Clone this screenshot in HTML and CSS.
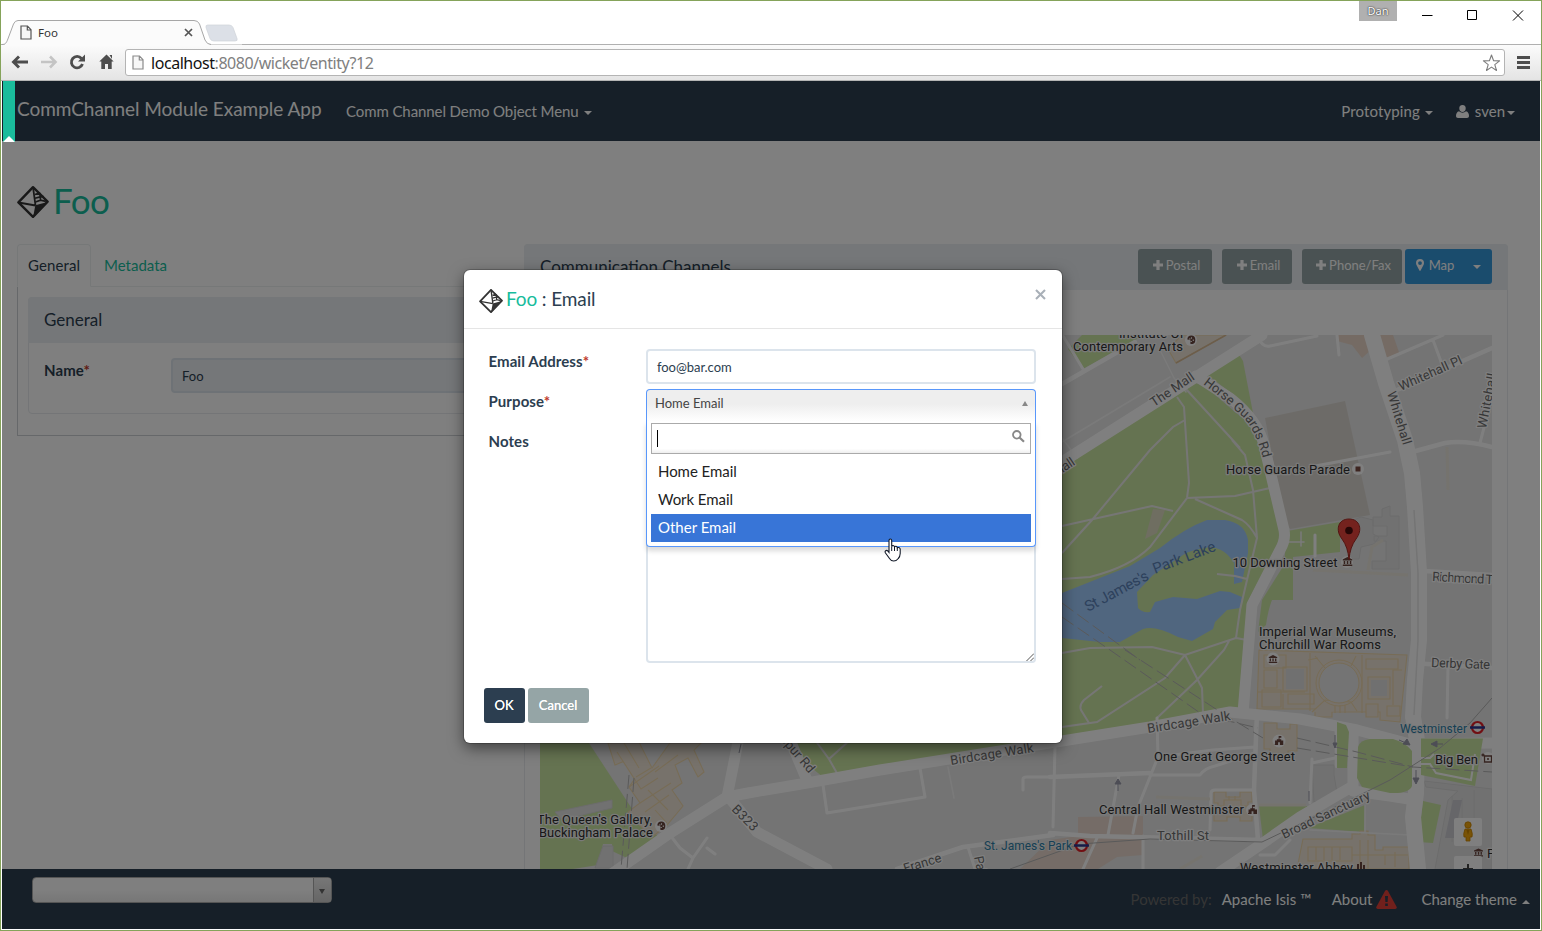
FILE: index.html
```html
<!DOCTYPE html>
<html lang="en">
<head>
<meta charset="utf-8">
<title>Foo</title>
<link rel="stylesheet" href="styles.css">
</head>
<body>
<svg width="0" height="0" class="defs" aria-hidden="true">
  <symbol id="gem" viewBox="0 0 32 32">
    <path d="M16 1.200 30.600 15.600 16 30.800 1.400 16.400Z" fill="none" stroke="#333" stroke-width="2.400" stroke-linejoin="round"/>
    <path d="M16 1 18.500 19.500M1.500 16.500 18.500 19.500" fill="none" stroke="#333" stroke-width="1.800"/>
    <path d="M18.300 19.300 31.500 15.800 16 31.800Z" fill="#333"/>
    <path d="M18 8.500l4.800-1.600M18 12.300l5.200-1.400 3.600-.2M18.500 16l5-1.800 5.400 1.200M22.800 6.900l.5 4M23.400 11v3.400" fill="none" stroke="#333" stroke-width="1.700"/>
  </symbol>
  <symbol id="file" viewBox="0 0 12 15"><path d="M1 1h6.500L11 4.700V14H1zM7.300 1v4H11" fill="#f7f7f7" stroke="currentColor" stroke-width="1.200"/></symbol>
  <symbol id="plus" viewBox="0 0 10 10"><path d="M3.400 0h3.200v3.400H10v3.200H6.600V10H3.400V6.600H0V3.400h3.400z" fill="currentColor"/></symbol>
  <symbol id="museum" viewBox="0 0 10 9"><path d="M5 0l5 2.400v1H0v-1zM1.200 4h1.500v3H1.200zM4.300 4h1.500v3H4.300zM7.300 4h1.500v3H7.300zM0 7.600h10V9H0z" fill="#6a463f"/></symbol>
  <symbol id="hall" viewBox="0 0 10 10"><path d="M4.600 0h3v2H5.500v1.500h2V5H10v5H0V9h.6V5h2V3.500h2z" fill="#6a463f"/><path d="M4 7h2v3H4z" fill="#fff"/></symbol>
</svg>

<div class="window">
  <header class="titlebar">
    <svg class="tab-shape" width="240" height="26" viewBox="0 0 240 26">
      <path d="M0 25C4 25 5 22 6 20L12 4Q13 1 17 1H192Q196 1 197 4L203 20Q205 24.500 209 24.500L240 24.500V26H0Z" fill="#fbfbfb"/>
      <path d="M0 24.500C4 24.500 4.500 22 5.500 20L11.500 4Q13 .5 16 .5H192Q196 .5 197.500 4L203 20Q205 24.500 209 24.500" fill="none" stroke="#a6a6a6"/>
      <path d="M205.500 5H227Q230 5 231 7.500L235 18.500Q236 21 233 21H212Q209 21 208 18.500L204 7.500Q203.500 5 205.500 5Z" fill="#dce0e7" stroke="#cfd2d8" stroke-width=".7"/>
    </svg>
    <div class="tab-title">
      <svg class="ico-file" style="color:#555"><use href="#file"/></svg>
      <span>Foo</span>
      <svg class="tab-x" width="9" height="9" viewBox="0 0 9 9"><path d="M1 1l7 7M8 1L1 8" stroke="#555" stroke-width="1.700"/></svg>
    </div>
    <div class="user-badge">Dan</div>
    <svg class="win-buttons" width="110" height="20" viewBox="0 0 110 20">
      <path d="M6 9.500h10.500M51.500 4.500h9v9h-9zM97 4.500l10 10M107 4.500l-10 10" fill="none" stroke="#000"/>
    </svg>
  </header>
  <div class="toolbar">
    <svg class="nav-icons" width="120" height="34" viewBox="-1 0 120 34">
      <path d="M17 11.500L11.500 17l5.500 5.500M12 17h14" fill="none" stroke="#4d4d4d" stroke-width="2.900"/>
      <path d="M48 11.500l5.500 5.500-5.500 5.500M53 17H39" fill="none" stroke="#c4c4c4" stroke-width="2.600"/>
      <path d="M79.500 13.500A5.700 5.700 0 1 0 80.500 19" fill="none" stroke="#4d4d4d" stroke-width="2.800"/>
      <path d="M83 9.500v7h-7z" fill="#4d4d4d"/>
      <path d="M104.500 9.500l7.200 7h-2V24H106v-5h-3v5H99.300v-7.500h-2zM107.500 10h2.500v4z" fill="#4d4d4d"/>
    </svg>
    <div class="address">
      <svg class="ico-file" style="color:#8a8a8a"><use href="#file"/></svg>
      <span class="url"><b>localhost</b>:8080/wicket/entity?12</span>
      <svg class="star" width="19" height="18" viewBox="0 0 19 18"><path d="M9.500 1l2.100 5.700 6 .2-4.800 3.700 1.700 5.900-5-3.400-5 3.400 1.700-5.900L1.400 6.900l6-.2z" fill="#fff" stroke="#7d7d7d" stroke-width="1.100" stroke-linejoin="round"/></svg>
    </div>
    <svg class="burger" width="13" height="13" viewBox="0 0 13 13"><path d="M0 1.500h13M0 6.500h13M0 11.500h13" stroke="#4d4d4d" stroke-width="3"/></svg>
  </div>

  <div class="viewport">
    <nav class="navbar">
      <span class="brand">CommChannel Module Example App</span>
      <span class="nav-item menu-main">Comm Channel Demo Object Menu<i class="caret"></i></span>
      <span class="nav-item menu-proto">Prototyping<i class="caret"></i></span>
      <span class="nav-item menu-user"><svg width="13" height="13" viewBox="0 0 13 13"><path d="M6.500 0a3.300 3.300 0 0 1 3.200 3.500C9.700 5.500 8.300 7 6.500 7S3.300 5.500 3.300 3.500A3.300 3.300 0 0 1 6.500 0zM3 6.300c2 1.900 5 1.900 7 0 2 .5 3 2.400 3 4.700 0 1.200-.8 2-2 2H2c-1.200 0-2-.8-2-2 0-2.300 1-4.200 3-4.700z" fill="currentColor"/></svg><span>sven</span><i class="caret tight"></i></span>
    </nav>

    <main class="content">
      <h1><svg width="32" height="32"><use href="#gem"/></svg><span>Foo</span></h1>
      <div class="columns">
        <section class="col-left">
          <div class="tabs"><span class="tab active">General</span><span class="tab">Metadata</span></div>
          <div class="tab-pane">
            <div class="panel">
              <div class="panel-heading"><span class="heading-text">General</span></div>
              <div class="panel-body">
                <label>Name<em>*</em></label>
                <div class="readonly">Foo</div>
              </div>
            </div>
          </div>
        </section>
        <section class="col-right panel">
          <div class="panel-heading">
            <span class="heading-text">Communication Channels</span>
            <span class="btn add postal"><svg width="10" height="10"><use href="#plus"/></svg>Postal</span>
            <span class="btn add email"><svg width="10" height="10"><use href="#plus"/></svg>Email</span>
            <span class="btn add phone"><svg width="10" height="10"><use href="#plus"/></svg>Phone/Fax</span>
            <span class="btn map-btn"><svg width="8" height="12" viewBox="0 0 8 12"><path fill-rule="evenodd" d="M4 0a4 4 0 0 1 4 4c0 1-.4 1.800-.9 2.700L4.600 11.600q-.6.700-1.200 0L.9 6.700C.4 5.800 0 5 0 4a4 4 0 0 1 4-4zM4 2.200a1.900 1.900 0 1 0 0 3.800 1.900 1.900 0 0 0 0-3.800z" fill="currentColor"/></svg>Map<i class="caret"></i></span>
          </div>
          <div class="map-wrap">
            <svg class="map" width="952" height="534" viewBox="540 335 952 534">
              <rect x="540" y="335" width="952" height="534" fill="#e8e8e8"/>
              <g fill="#cbe6a3">
                <path d="M1050 470L1192 382 1205 386 1235 412 1258 430 1268 475 1280 532 1278 545 1247 603 1244 660 1239 710 1062 738 823 777 808 765 785 740 800 500Z"/>
                <path d="M1205 373L1238 353 1243 361 1253 413 1235 396Z"/>
                <path d="M1068 349L1082 335H1144L1083 369Z"/>
                <path d="M1287 531L1340 522V552L1293 557V600L1272 600Q1268 610 1266 625L1258 632 1262 600 1284 565Z"/>
                <path d="M540 740H587L638 818 660 838 627 858 612 851V844H603L598 865 573 869H540Z"/>
                <path d="M1259 806H1308L1263 840Z"/>
                <path d="M1365 805L1364 832 1308 828Z"/>
                <path d="M1423 801L1441 805 1433 843 1418 842Z"/>
              </g>
              <path d="M1337 335H1393L1400 355 1386 359 1372 349 1362 358 1352 345 1337 341Z" fill="#ead7c9"/>
              <path d="M1078 817L1143 816V855L1117 857 1098 869H1020L1050 840 1078 836Z" fill="#ead9ce"/>
              <path d="M1265 418L1345 401 1370 515 1290 529 1284 520 1272 455Z" fill="#dbd7d0"/>
              <path d="M1062 593L1130 566 1160 548Q1185 528 1207 520H1225Q1245 523 1248 540V553L1242 582 1234 584 1234 563Q1225 548 1210 547 1190 550 1183 555L1153 575 1137 592 1138 608Q1142 613 1150 612L1155 602 1173 597 1197 599 1220 591 1230 592 1242 597 1240 608 1227 610 1215 622 1213 629 1192 641 1178 637Q1155 625 1143 629L1120 642H1100L1062 638Z" fill="#a1ccff"/>
              <path d="M1153 509L1165 510 1157 533 1145 539Z" fill="#dedcc2"/>

              <!-- buildings -->
              <g fill="#eee5d7" stroke="#efd8ac" stroke-width="1.100">
                <path d="M1168 349L1182 335H1226L1176 363Z"/>
                <path d="M608 743L615 765 627 760 636 777 629 787 640 803 628 812 651 838 667 825 683 806 672 790 682 783 675 765 688 758 698 777 704 772 694 750 704 740H672L652 768 638 740Z"/>
                <path d="M617 752l24 37 17-11M636 777l15-9M640 803l31-20M648 790l20 20M629 787l30-21M655 772l23-17M645 812l24-17M624 743l15 25M655 810l12 13"/>
                <path d="M1259 650L1407 655 1400 722 1380 720V712H1332V717H1315V709H1257Z"/>
                <path d="M1264 655H1286V668H1264zM1262 690H1281V707H1262zM1288 694H1314V704H1288zM1366 659H1398V669H1366zM1368 677H1390V699H1368zM1366 704H1378V717H1366zM1387 706H1400V716H1387zM1264 670H1277V688H1264zM1283 667H1307V691H1283z"/>
                <path d="M1310 653V711M1362 655V713M1402 670H1393V705M1308 660L1318 658M1312 712L1325 700 1351 702 1357 711M1335 705v8M1340 705v8M1345 705v8M1257 692h48M1283 709v-15M1315 656l10 12M1356 656l-5 10"/>
                <path d="M1264 723h13v6h13v-5h7v27h-9v5h-18v-7h-6z"/>
                <path d="M1214 792h12v5h14v-5h12v10h-4v10h4v9h-12v-4h-13v4h-13v-8h4v-10h-4zM1224 800h17v12h-17zM1229 800v-4M1235 800v-4M1218 806h6M1241 806h8"/>
                <path d="M1303 839h49v-5h8v-3h8v4h7v15h8v-3h26v22h-112zM1308 847h44v14h-44zM1316 847v13M1324 847v13M1332 847v13M1340 847v13M1360 840v29M1368 840v29M1352 855h56M1385 855v10M1395 852v15"/>
              </g>
              <circle cx="1339" cy="683" r="20" fill="#e8e8e8" stroke="#efd8ac"/>
              <circle cx="1339" cy="683" r="23" fill="none" stroke="#efd8ac"/>
              <g fill="#e0e0e0"><path d="M1286 669h18v20h-18zM1371 680h16v16h-16zM1278 640h20v2h-20z"/></g>
              <path d="M1176 363L1226 335" stroke="#d8bb95" stroke-width="1.500"/>
              <g fill="#e3e3e3" stroke="#d8d8d8">
                <path d="M1341 525l20-8 12 3v14l6 3-5 7-13 3-2 12h-10zM1373 517h9v-8l8-3v10h9v53h-27v-8h14v-20h-12v-5h13v-10h-14z"/>
                <path d="M1312 765h22v10l4 24-24 3z"/>
                <path d="M1424 781l68 8V869h-57l13-69 10-9-32-4zM1452 796v46M1462 798v48M1474 790v40"/>
                <path d="M555 812l57-12v8l-50 12zM603 846h10v22h-18z"/>
              </g>
              <path d="M1453 800h9l-8 38h-9z" fill="#ccccd3"/>

              <!-- park paths -->
              <g fill="none" stroke="#ededeb" stroke-width="2">
                <path d="M1185 388L1240 448M1177 397L1184 407 1189 483 1187 498 1150 547Q1130 567 1090 577L1062 579M1185 420L1173 427 1150 450 1092 520 1062 553M1062 526L1152 506 1173 511M1187 498L1235 496 1270 488M1195 499L1242 520Q1250 525 1257 538M1232 440L1245 455 1253 490 1257 538 1247 580 1240 610 1236 638 1185 655 1152 647 1090 648 1062 653M1236 638L1247 640M1217 574L1235 576 1247 579M1229 641L1224 650 1197 680 1157 718M1185 655L1165 678 1097 722 1062 727M1102 686L1084 700Q1079 705 1081 710L1089 723M1185 655L1202 688 1203 713M815 740L829 759 850 740M829 759L838 775"/>
              </g>
              <g fill="none" stroke="#fff" stroke-linecap="round" stroke-linejoin="round">
                <g stroke-width="1.500" stroke="#f5f5f5"><path d="M1062 442L1170 377M1160 350L1174 378 1186 392M948 767L954 798M1310 830L1410 835M1365 805V832M1062 438l15 20M1301 532v14M1288 542h16"/></g>
                <g stroke-width="3"><path d="M1063 336L1083 369M1257 335Q1262 348 1270 346L1317 336M1337 335L1339 355M1385 360L1443 335M1433 340L1443 367M1480 443L1492 397M1310 467L1390 452M1315 535V556M1119 775L1108 835M1097 838L1083 869M1143 836V869M1150 775H1200Q1205 768 1215 766L1255 753M1158 757L1213 750 1255 747M1157 718L1158 757 1138 807 1133 833M1210 830L1211 793Q1211 790 1215 790H1254M1448 667L1447 718M823 785L827 813 925 797 920 768M1023 790V779Q1023 777 1027 777H1050M670 835L680 848 693 858 707 838M693 858L688 869M968 847L975 869M1312 759L1310 803M1312 763L1335 758M707 848L715 854M1055 747L1053 827M1260 855H1275L1290 840"/></g>
                <g stroke-width="4.500"><path d="M1062 384L1135 342M1397 390L1492 348M1412 452L1445 443Q1465 440 1492 447M1050 777L1150 773M1257 712L1254 790 1258 840M1050 833L1090 836 1262 840M897 869L963 847 1053 835M1337 724V766M1411 663L1492 668M1424 571L1492 575"/></g>
                <g stroke-width="11"><path d="M1040 476L1262 335M1196 376L1230 398Q1258 420 1264 445L1284 530Q1286 540 1280 550L1252 605 1243 713M610 875L670 833 727 797 748 793 807 783 880 770 1062 741 1150 727 1230 712 1300 719 1357 730 1410 744 1492 743M727 797L738 742M790 740L806 778M728 796L757 832 827 869M1220 872L1263 843 1300 817 1353 786 1353 733M1353 791L1390 796 1415 800"/></g>
                <path stroke-width="16" d="M1372 335L1386 383 1405 440 1412 473 1415 507 1419 573 1419 640 1415 680 1413 717 1417 740 1416 793 1413 817 1418 869"/>
              </g>
              <g fill="#cbe6a3">
                <path d="M1358 747Q1360 740 1370 739H1393Q1405 742 1412 751V786Q1409 794 1390 793L1362 787 1357 778Z"/>
                <path d="M1337 722L1346 725 1349 732 1347 768H1337Z"/>
                <path d="M1421 738.500H1483L1475 786 1421 775Z"/>
              </g>
              <path d="M1420 758H1430L1434 754M1420 764H1430L1436 773 1471 780 1475 754" fill="none" stroke="#fff" stroke-width="2"/>
              <path d="M1414 510L1418 573 1418 640 1414 715" fill="none" stroke="#e8e8e8" stroke-width="1.500"/>
              <g fill="none" stroke="#ebe7dc" stroke-width="3"><path d="M1313 570L1408 575M1368 570L1372 547 1383 540M1447 447L1448 490M1156 797L1210 799M1180 869L1202 856M1259 805H1306"/></g>

              <!-- rail -->
              <g fill="none" stroke="#b4b4b4" stroke-width="1">
                <path d="M1062 603L1140 660M1125 650L1222 713 1263 738M1062 617L1110 650 1203 715 1258 728M1297 738L1357 752 1413 767 1492 772M1297 748L1413 767M629 775L621 869M634 778L627 869" stroke-dasharray="14 5"/>
                <path d="M1492 698L1470 723 1440 748 1390 780 1350 800 1262 842 1150 839 1080 844 1010 869"/>
              </g>
              <g fill="#9a9bab" stroke="#9a9bab"><path d="M1118 791V782M1118 779l-3 5h6zM1416 770v9M1416 784l-3-6h6zM1443 744h-8M1431 744l6-3v6zM1399 740l7 3M1410 745l-7-1 4-5zM1335 735v8M1335 748l-2-5h4zM1309 791v10M739 753l2-9"/></g>

              <!-- labels -->
              <g class="road">
                <text transform="translate(1154 407) rotate(-34)" textLength="50">The Mall</text>
                <text transform="translate(1036 491) rotate(-34)" textLength="48">The Mall</text>
                <path id="hg" d="M1203 384L1224 400 1243 417Q1255 430 1262 455L1272 490" fill="none" stroke="none"/>
                <text><textPath href="#hg" textLength="98">Horse Guards Rd</textPath></text>
                <text transform="translate(1401 391) rotate(-24)" textLength="68">Whitehall Pl</text>
                <text transform="translate(1387 393) rotate(73)" textLength="55">Whitehall</text>
                <text transform="translate(1486 429) rotate(-79)" textLength="56">Whitehall</text>
                <text transform="translate(1432 581) rotate(3)" textLength="70">Richmond Ter</text>
                <text transform="translate(1431 667) rotate(2)" textLength="59">Derby Gate</text>
                <text transform="translate(1148 733) rotate(-9)" textLength="84">Birdcage Walk</text>
                <text transform="translate(951 765) rotate(-9)" textLength="84">Birdcage Walk</text>
                <text x="1157" y="840" textLength="52">Tothill St</text>
                <text transform="translate(1284 839) rotate(-25)" textLength="96">Broad Sanctuary</text>
                <text transform="translate(731 810) rotate(45)" textLength="31">B323</text>
                <text transform="translate(779 739) rotate(49)" textLength="46">Spur Rd</text>
                <text transform="translate(905 873) rotate(-17)" textLength="39">France</text>
                <text transform="translate(974 857) rotate(78)" textLength="50">Palmer St</text>
              </g>
              <text class="lake" transform="translate(1088 612) rotate(-28)" textLength="70">St James's</text>
              <text class="lake" transform="translate(1155 574) rotate(-21)" textLength="66">Park Lake</text>
              <g class="place">
                <text x="1119" y="338" textLength="65">Institute Of</text>
                <text x="1073" y="350.500" textLength="110">Contemporary Arts</text>
                <text x="1226" y="473.500" textLength="124">Horse Guards Parade</text>
                <text x="1232.500" y="566.500" textLength="105">10 Downing Street</text>
                <text x="1259" y="635.500" textLength="137">Imperial War Museums,</text>
                <text x="1259" y="648.500" textLength="122">Churchill War Rooms</text>
                <text x="1154" y="760.500" textLength="141">One Great George Street</text>
                <text x="1099" y="813.500" textLength="145">Central Hall Westminster</text>
                <text x="1435" y="763.500" textLength="43">Big Ben</text>
                <text x="537" y="823.500" textLength="115">The Queen's Gallery,</text>
                <text x="539" y="836.500" textLength="114">Buckingham Palace</text>
                <text x="1240" y="871.500" textLength="113">Westminster Abbey</text>
                <text x="1487" y="857.500">P</text>
              </g>
              <g class="station">
                <text x="1400" y="732.500" textLength="67">Westminster</text>
                <text x="984" y="849.500" textLength="88">St. James's Park</text>
              </g>
              <g fill="#fff" stroke="#e21f26" stroke-width="2.200"><circle cx="1477.500" cy="727.500" r="5.500"/><circle cx="1081.500" cy="845.500" r="5.500"/></g>
              <path d="M1470 727.500h15M1074 845.500h15" stroke="#2d3790" stroke-width="2.500"/>
              <g fill="#fff"><circle cx="1191" cy="340" r="6"/><circle cx="1358" cy="469" r="6"/><circle cx="1347" cy="562" r="6"/><circle cx="1273" cy="659" r="6.500"/><circle cx="1279" cy="741" r="6.500"/><circle cx="1252" cy="810" r="6"/><circle cx="661" cy="826" r="6"/><circle cx="1488" cy="758" r="6"/></g>
              <path d="M1355.500 466.500h5v5h-5z" fill="#7a4b40"/>
              <g id="palette"><path d="M1187.300 339.500q.2-4 4-4t4 4-2.800 4.500-2-2-3.200-2.500z" fill="#6a463f"/><path d="M1189 339h1.500M1191.500 337.300v1.500M1193.300 339.500v1.500M1191.300 341v1" stroke="#fff" stroke-width="1.100"/></g>
              <use href="#palette" x="-530" y="486"/>
              <path d="M1484.500 756h7v6h-7zM1487 759h2M1483 753.500v3M1481.500 755h3" fill="#fff" stroke="#6a463f" stroke-width="1.300"/>
              <use href="#museum" x="1342.500" y="557" width="10" height="9"/>
              <use href="#museum" x="1268.500" y="655" width="9" height="8"/>
              <use href="#museum" x="1474" y="848" width="9" height="9"/>
              <use href="#hall" x="1274.500" y="736" width="9" height="9"/>
              <use href="#hall" x="1248" y="805" width="9" height="9"/>
              <path d="M1358 869v-5M1361 869v-7M1364 869v-4" stroke="#6a463f" stroke-width="2"/>
              <path d="M1349 559.500Q1348 547 1342 539C1335 530 1338 519 1349 519S1363 530 1356 539Q1350 547 1349 559.500Z" fill="#e8453c" stroke="#a52b24"/>
              <circle cx="1349" cy="530.500" r="3.800" fill="#4c0d0d"/>
              <g fill="#fff"><rect x="1454" y="818" width="28" height="28" rx="2"/><rect x="1454" y="856" width="28" height="28" rx="2"/></g>
              <path d="M1465 829q-2 5-1 8h2v4h4v-4h2q1-3-1-8z" fill="#f2a60c" stroke="#c98400" stroke-width=".8"/><circle cx="1468" cy="825" r="3.200" fill="#f2a60c" stroke="#c98400" stroke-width=".8"/><path d="M1466.500 830l1.500 5 1.500-5z" fill="#c98400"/>
              <path d="M1463 869h10M1468 864v8" stroke="#444" stroke-width="2"/>
            </svg>
          </div>
        </section>
      </div>
    </main>

    <footer class="footer">
      <div class="foot-select"><span></span><i></i></div>
      <span class="powered">Powered by:</span>
      <span class="foot-link isis">Apache Isis ™</span>
      <span class="foot-link about">About<svg width="21" height="19" viewBox="0 0 21 19"><path d="M10.500 0q1 0 1.500.9l8.700 16q.4 2-1.500 2.100H1.800Q-.1 18.900.3 17L9 .9Q9.500 0 10.500 0z" fill="#e04038"/><path d="M9 6h3l-.4 6H9.400zM9.200 13.500h2.600V16H9.200z" fill="#2c3e50"/></svg></span>
      <span class="foot-link theme">Change theme<i class="caret up"></i></span>
    </footer>

    <div class="backdrop"></div>
    <div class="bookmark"><svg width="12" height="6" viewBox="0 0 12 6"><path d="M0 6L6 0l6 6z" fill="#fff"/></svg></div>

    <div class="modal">
      <div class="modal-header">
        <svg class="gem-small" width="24" height="24" viewBox="0 0 24 24"><use href="#gem" width="24" height="24"/></svg>
        <span class="modal-title"><b>Foo</b> : Email</span>
        <svg class="close" width="11" height="11" viewBox="0 0 11 11"><path d="M1 1l9 9M10 1L1 10" stroke="#a9b0b8" stroke-width="2.100"/></svg>
      </div>
      <div class="modal-body">
        <label>Email Address<em>*</em></label>
        <div class="input">foo@bar.com</div>
        <label>Purpose<em>*</em></label>
        <div class="select">
          <div class="select-value">Home Email<i></i></div>
          <div class="dropdown">
            <div class="search"><svg width="13" height="13" viewBox="0 0 13 13"><circle cx="4.800" cy="4.800" r="3.800" fill="none" stroke="#888" stroke-width="1.800"/><path d="M7.500 7.500l4.500 4.300" stroke="#888" stroke-width="2.200"/></svg></div>
            <div class="option">Home Email</div>
            <div class="option">Work Email</div>
            <div class="option selected">Other Email</div>
          </div>
        </div>
        <label>Notes</label>
        <div class="textarea"><svg width="8" height="8" viewBox="0 0 8 8"><path d="M.5 8L8 .5M4.500 8L8 4.500" stroke="#555"/></svg></div>
      </div>
      <div class="modal-actions"><span class="btn ok">OK</span><span class="btn cancel">Cancel</span></div>
    </div>
    <svg class="pointer" width="18" height="24" viewBox="0 0 18 24"><path d="M5 14.500V2.500Q5 1 6.300 1T7.700 2.500V8.500Q8 7.500 9.100 7.500T10.500 9Q11 8.200 12 8.300T13.300 9.800Q14 9.300 14.800 9.500T16.200 11V15.500Q16 19 14.300 20.500 12.500 23 9.700 23 7 23 5.500 20.500L1.500 15Q.6 13.500 1.700 12.700T4 13.200Z" fill="#fff" stroke="#111827" stroke-width="1.100"/><path d="M7.700 8.500V13M10.500 9V13M13.300 10V13" stroke="#111827" stroke-width="1"/></svg>
  </div>
</div>
</body>
</html>
```
FILE: styles.css
```css
* { box-sizing: border-box; }
body { margin: 0; font-family: Lato, "Liberation Sans", sans-serif; font-size: 15px; color: #2c3e50; line-height: 20px; }
svg { display: block; flex: none; }
.defs { position: absolute; }
em { font-style: normal; color: #c0392b; }
.window { width: 1542px; height: 931px; border: 1px solid #85a35a; background: #fff; display: flex; flex-direction: column; overflow: hidden; }

.titlebar { height: 44px; position: relative; display: flex; border-bottom: 1px solid #b0b0b0; flex: none; }
.tab-shape { position: absolute; left: 1px; top: 19px; }
.tab-title { position: relative; width: 204px; margin-top: 19px; height: 25px; padding: 0 12px 0 19px; display: flex; align-items: center; font: 12px "Noto Sans", sans-serif; color: #333; }
.tab-title span { margin-left: 6px; flex: 1; font-size: 11.5px; }
.ico-file { width: 12px; height: 15px; }
.user-badge { margin-left: auto; width: 38px; height: 20px; background: #b0b0b0; color: #fff; font: 11px/20px "Noto Sans", sans-serif; text-align: center; text-shadow: 0 0 2px #333, 0 0 1px #333; }
.win-buttons { margin: 5px 15px 0 19px; }

.toolbar { height: 36px; flex: none; display: flex; align-items: center; background: linear-gradient(#fbfbfb, #e4e4e4); border-bottom: 1px solid #b5b5b5; }
.nav-icons { margin-top: -1px; }
.address { flex: 1; height: 27px; margin-left: 4px; border: 1px solid #b4b4b4; border-radius: 3px; background: #fff; display: flex; align-items: center; padding: 0 3px 0 6px; }
.url { flex: 1; margin-left: 7px; font: 16px "Noto Sans", sans-serif; letter-spacing: -.45px; color: #808080; }
.url b { font-weight: 400; color: #111; }
.burger { margin: -1px 11px 0 12px; }

.viewport { position: relative; height: 848px; width: 1538px; margin-left: 1px; flex: none; display: flex; flex-direction: column; overflow: hidden; background: #fff; }
.navbar { height: 60px; flex: none; background: #2c3e50; color: #fff; display: flex; align-items: center; padding: 0 25px 0 15px; }
.brand { font-size: 19px; margin-top: -4px; width: 329px; white-space: nowrap; letter-spacing: -.03px; }
.nav-item { display: flex; align-items: center; white-space: nowrap; }
.menu-main { letter-spacing: -.09px; }
.menu-proto { margin-left: auto; margin-right: 23px; letter-spacing: .1px; }
.menu-user span { margin-left: 6px; }
.caret { width: 0; height: 0; border: 4px solid transparent; border-top-color: currentColor; border-bottom: 0; margin: 3px 0 0 5px; }
.caret.tight { margin-left: 2px; }
.caret.up { border-top: 0; border-bottom: 4px solid currentColor; }

.content { flex: 1; padding: 40px 32px 0 15px; overflow: hidden; }
h1 { margin: 0; height: 41px; display: flex; align-items: center; gap: 4px; font-size: 35px; font-weight: 400; color: #18bc9c; line-height: 42px; letter-spacing: -.5px; }
h1 svg { margin-top: 1px; }
h1 span { margin-top: -3px; }
.columns { display: flex; margin-top: 22px; align-items: flex-start; }
.col-left { width: 487px; margin-right: 20px; }
.tabs { height: 43px; display: flex; border-bottom: 1px solid #ecf0f1; }
.tab { padding: 11px 10px 0; height: 43px; color: #18bc9c; margin-left: 3px; }
.tab.active { margin-left: 0; width: 74px; padding: 10px 0 0 10px; letter-spacing: .1px; color: #2c3e50; border: 1px solid #ecf0f1; border-bottom-color: #fff; border-radius: 4px 4px 0 0; }
.tab-pane { border: 1px solid #ccd0d4; border-top: 0; padding: 10px; height: 149px; }
.panel { border: 1px solid #e8ebee; border-radius: 4px; }
.tab-pane .panel { height: 117px; }
.panel-heading { height: 46px; margin: -1px -1px 0; padding: 0 16px; background: #ebeef2; border-radius: 4px 4px 0 0; display: flex; align-items: center; }
.heading-text { font-size: 17px; flex: 1; }
.panel-body { display: flex; padding: 15px; }
label { font-weight: 700; letter-spacing: .08px; }
.panel-body label { width: 127px; padding-top: 2px; }
.readonly { flex: 1; height: 35px; border: 2px solid #dce4ec; border-radius: 4px; background: #ebeef2; padding: 6px 9px; font-size: 13px; }
.col-right { width: 984px; height: 700px; flex: none; }
.btn { height: 35px; border-radius: 3px; display: flex; align-items: center; color: #fff; font-size: 13px; background: #95a5a6; justify-content: center; white-space: nowrap; padding-bottom: 2px; }
.add { gap: 3px; margin: -2px 10px 0 0; padding-left: 3px; }
.postal { width: 74px; }
.email { width: 70px; }
.phone { width: 100px; margin-right: 3px; }
.map-btn { width: 87px; background: #3498db; gap: 5px; margin-top: -2px; }
.map-btn .caret { margin-left: 14px; }
.map-wrap { padding: 45px 15px 0 15px; }

.footer { height: 60px; flex: none; background: #2c3e50; color: #fff; display: flex; align-items: center; padding: 0 10px 0 30px; }
.foot-select { width: 300px; height: 26px; margin: -18px auto 0 0; border: 1px solid #aaa; border-radius: 4px; background: linear-gradient(#fff 50%, #eee); display: flex; overflow: hidden; }
.foot-select span { flex: 1; }
.foot-select i { width: 18px; border-left: 1px solid #aaa; background: linear-gradient(#eee, #ccc); position: relative; }
.foot-select i::after { content: ""; position: absolute; left: 5px; top: 11px; border: 3px solid transparent; border-top: 5px solid #666; border-bottom: 0; }
.powered { color: #6b6b6b; margin-right: 10px; letter-spacing: -.05px; }
.isis { margin-right: 20px; letter-spacing: .08px; }
.foot-link { display: flex; align-items: center; white-space: nowrap; }
.about { gap: 4px; margin-right: 24px; }
.theme .caret { margin-left: 5px; margin-top: 5px; }

.backdrop { position: absolute; inset: 0; background: rgba(0, 0, 0, .5); }
.bookmark { position: absolute; left: 1px; top: 0; width: 12px; height: 61px; background: #1abc9c; display: flex; align-items: flex-end; }

.modal { position: absolute; left: 462px; top: 189px; width: 598px; height: 473px; background: #fff; border-radius: 6px; box-shadow: 0 0 0 1px rgba(0, 0, 0, .2), 0 5px 15px rgba(0, 0, 0, .5); }
.modal-header { height: 59px; border-bottom: 1px solid #e5e5e5; padding: 0 16px 0 15px; display: flex; align-items: center; }
.gem-small { margin-top: 4px; }
.modal-title { flex: 1; margin-left: 3px; font-size: 19px; letter-spacing: -.12px; }
.modal-title b { font-weight: 400; color: #18bc9c; }
.close { margin-top: -10px; }
.modal-body { display: grid; grid-template-columns: 157.5px 390px; grid-template-rows: 35px 32px 232px; row-gap: 5px; padding: 20px 0 0 24.5px; }
.modal-body label { padding-top: 2px; }
.input { border: 2px solid #dce4ec; border-radius: 4px; font-size: 13px; padding: 6px 9px; letter-spacing: -.05px; }
.select { position: relative; z-index: 2; }
.select-value { height: 32px; border: 1px solid #5897fb; border-bottom: 0; border-radius: 4px 4px 0 0; background: linear-gradient(#eee 45%, #fff); padding: 3px 8px; font-size: 13px; color: #444; position: relative; }
.select-value i { position: absolute; right: 7px; top: 11px; border: 3px solid transparent; border-top: 0; border-bottom: 5px solid #888; }
.dropdown { position: absolute; top: 32px; left: 0; width: 390px; height: 126px; border: 1px solid #5897fb; border-top: 0; border-radius: 0 0 4px 4px; background: #fff; box-shadow: 0 4px 5px rgba(0, 0, 0, .15); padding: 2px 4px; }
.search { height: 31px; border: 1px solid #aaa; background: linear-gradient(#fff 85%, #eee); margin-bottom: 4px; position: relative; display: flex; justify-content: flex-end; padding: 6px 5px; }
.search::before { content: ""; position: absolute; left: 5px; top: 6px; width: 1px; height: 17px; background: #000; }
.option { height: 28px; padding: 3px 7px; color: #222; letter-spacing: -.05px; }
.option.selected { background: #3875d7; color: #fff; letter-spacing: 0; }
.textarea { border: 2px solid #dce4ec; border-radius: 4px; margin-top: -5px; height: 242px; display: flex; justify-content: flex-end; align-items: flex-end; }
.modal-body label:last-of-type { padding-top: 5px; }
.modal-actions { display: flex; gap: 3px; padding: 30px 0 0 20px; }
.modal-actions .btn { text-shadow: 0 0 .5px #fff; }
.ok { width: 41px; background: #2c3e50; padding-right: 1px; }
.cancel { width: 61px; padding-right: 1px; }
.pointer { position: absolute; z-index: 3; left: 882px; top: 457px; }

.map { overflow: hidden; font-family: Roboto, sans-serif; }
.map text { paint-order: stroke; stroke-linejoin: round; }
.road text { font-size: 13px; fill: #6e6e6e; stroke: #fff; stroke-width: 2.5px; }
.place text { font-size: 13px; fill: #303030; stroke: #f4f4f4; stroke-width: 2.5px; }
.station text { font-size: 12px; fill: #2c7fa8; stroke: #f0f0f0; stroke-width: 2px; }
.map .lake { font-size: 15px; fill: #5a82b8; }
```
